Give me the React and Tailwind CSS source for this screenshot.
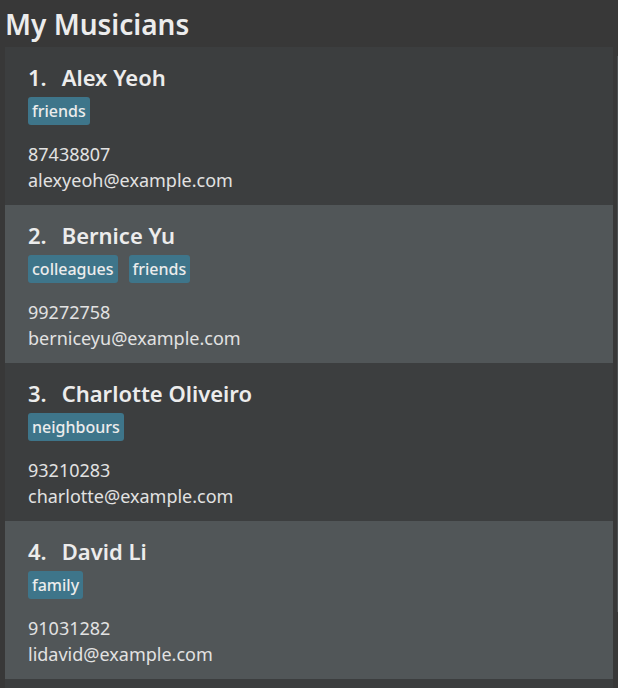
const musicians = [
  { name: "Alex Yeoh", tags: ["friends"], phone: "87438807", email: "alexyeoh@example.com" },
  { name: "Bernice Yu", tags: ["colleagues", "friends"], phone: "99272758", email: "berniceyu@example.com" },
  { name: "Charlotte Oliveiro", tags: ["neighbours"], phone: "93210283", email: "charlotte@example.com" },
  { name: "David Li", tags: ["family"], phone: "91031282", email: "lidavid@example.com" },
];

export default function App() {
  return (
    <main className="relative flex min-h-screen flex-col bg-[#383838] px-[5px] font-['Noto_Sans','Open_Sans',sans-serif] text-[#ececec]">
      <h1 className="pt-1 pb-[3px] text-[28px] leading-10 font-semibold">My Musicians</h1>
      <ol className="grow bg-[#3c3e3f]">
        {musicians.map((m, i) => (
          <li key={m.name} className="px-[23px] pt-[15px] pb-3 even:bg-[#515658]">
            <h2 className="flex gap-[15px] text-[22px] leading-[30px] font-semibold">
              <span>{i + 1}.</span>
              <span>{m.name}</span>
            </h2>
            <ul className="mt-[5px] flex gap-[11px]">
              {m.tags.map((t) => (
                <li key={t} className="rounded-[3px] bg-[#3e758a] px-1 text-base leading-7 font-medium">{t}</li>
              ))}
            </ul>
            <div className="mt-4 text-lg leading-[26px] text-[#e2e2e2]">
              <p>{m.phone}</p>
              <p>{m.email}</p>
            </div>
          </li>
        ))}
      </ol>
      <div className="absolute top-14 right-0 bottom-[76px] w-px bg-[#4c5052]" />
    </main>
  );
}
